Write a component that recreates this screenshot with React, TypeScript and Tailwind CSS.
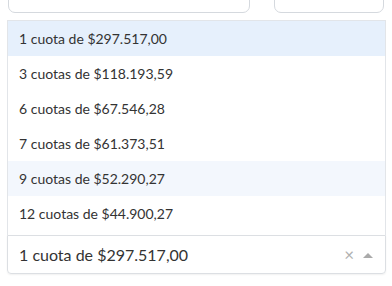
import React from 'react';

const options = [
  '1 cuota de $297.517,00',
  '3 cuotas de $118.193,59',
  '6 cuotas de $67.546,28',
  '7 cuotas de $61.373,51',
  '9 cuotas de $52.290,27',
  '12 cuotas de $44.900,27',
];

const App: React.FC = () => {
  return (
    <div className="w-[392px] h-[286px] bg-white overflow-hidden font-['Lato',sans-serif] text-[#333]">
      <div className="flex gap-[24px] px-[8px] -mt-[28px]">
        <div className="w-[245px] h-[41px] border border-[#d5d9de] rounded-[7px]" />
        <div className="w-[111px] h-[41px] border border-[#d5d9de] rounded-[7px]" />
      </div>

      <div className="ml-[7px] mt-[7px] w-[379px]">
        <ul className="border-l border-r border-t border-[#e2e5e9] pb-[4px]">
          {options.map((o, i) => (
            <li
              key={o}
              className={
                'h-[35px] flex items-center pl-[11px] text-[14px] ' +
                (i === 0 ? 'bg-[#e6f0fc]' : i === 4 ? 'bg-[#f3f7fd]' : 'bg-white')
              }
            >
              {o}
            </li>
          ))}
        </ul>
        <div className="h-[39px] flex items-center justify-between border border-[#dcdfe3] rounded-b-[4px] shadow-[0_1px_2px_rgba(0,0,0,0.06)] pl-[11px] pr-[12px]">
          <span className="text-[16px]">1 cuota de $297.517,00</span>
          <div className="flex items-center gap-[9px]">
            <span className="text-[#b0b0b0] text-[17px] leading-none">×</span>
            <svg width="10" height="6" viewBox="0 0 10 6">
              <path d="M0 6 L5 1 L10 6 Z" fill="#aaa" />
            </svg>
          </div>
        </div>
      </div>
    </div>
  );
};

export default App;
